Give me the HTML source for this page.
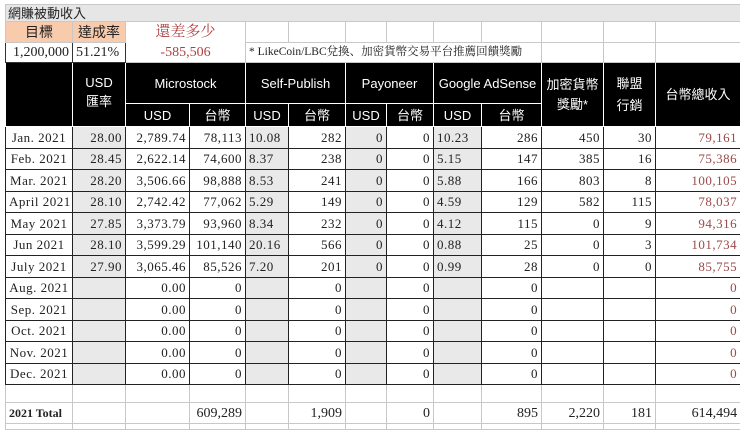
<!DOCTYPE html>
<html><head><meta charset="utf-8"><style>
body{margin:0;background:#fff;width:740px;height:427px;overflow:hidden;font-family:"Liberation Serif","Noto Serif CJK SC",serif;}
table{position:absolute;left:5px;top:4px;border-collapse:collapse;table-layout:fixed;width:735px}
td{border:1px solid #c8c8c8;padding:0 3px;font-size:13px;white-space:nowrap;overflow:hidden;text-align:right;color:#222;line-height:15px}
.t td{height:16px}
.h{background:#000;color:#fff;font-family:"Liberation Sans","Noto Sans CJK TC",sans-serif;font-size:13px;text-align:center;border-color:#fff}
.d td{height:20.5px;border-color:#222;letter-spacing:.5px}
.g{background:#e9e9e9}
.r{color:#9b4a4a}
.pk{background:#f8cbad;text-align:center;font-family:"Liberation Sans","Noto Sans CJK TC",sans-serif;font-size:14px}
.c{text-align:center}
.tot td{height:20px;font-size:14px}
</style></head><body>
<table>
<colgroup><col style="width:67px"><col style="width:53px"><col style="width:64px"><col style="width:56px"><col style="width:43px"><col style="width:57px"><col style="width:41px"><col style="width:47px"><col style="width:48px"><col style="width:60px"><col style="width:62px"><col style="width:52px"><col style="width:85px"></colgroup>
<tr class="t"><td colspan="13" style="background:#e6e6e6;text-align:left;font-family:'Liberation Sans','Noto Sans CJK TC',sans-serif;font-size:13px;padding-left:2px">網賺被動收入</td></tr>
<tr style="height:21px"><td class="pk">目標</td><td class="pk">達成率</td><td colspan="2" class="c" style="color:#b04040;font-size:15px;border-bottom:none">還差多少</td><td></td><td></td><td></td><td></td><td></td><td></td><td></td><td></td><td></td></tr>
<tr style="height:20px"><td style="font-size:14px;border-color:#333">1,200,000</td><td style="text-align:left;font-size:14px;border-color:#333">51.21%</td><td colspan="2" class="c" style="color:#b04040;font-size:14px;border-top:none">-585,506</td><td colspan="6" style="text-align:left;font-size:11.5px">* LikeCoin/LBC兌換、加密貨幣交易平台推薦回饋獎勵</td><td></td><td></td><td></td></tr>
<tr style="height:41px"><td class="h" rowspan="2"></td><td class="h" rowspan="2" style="vertical-align:top;padding-top:10px;line-height:19px">USD<br>匯率</td><td class="h" colspan="2">Microstock</td><td class="h" colspan="2">Self-Publish</td><td class="h" colspan="2">Payoneer</td><td class="h" colspan="2">Google AdSense</td><td class="h" rowspan="2" style="line-height:20px">加密貨幣<br>獎勵*</td><td class="h" rowspan="2" style="line-height:22px">聯盟<br>行銷</td><td class="h" rowspan="2">台幣總收入</td></tr>
<tr style="height:23px"><td class="h">USD</td><td class="h">台幣</td><td class="h">USD</td><td class="h">台幣</td><td class="h">USD</td><td class="h">台幣</td><td class="h">USD</td><td class="h">台幣</td></tr>
<tr class="d"><td class="c">Jan. 2021</td><td class="g">28.00</td><td>2,789.74</td><td>78,113</td><td class="g" style="text-align:left">10.08</td><td>282</td><td class="g">0</td><td>0</td><td class="g" style="text-align:left">10.23</td><td>286</td><td>450</td><td>30</td><td class="r">79,161</td></tr>
<tr class="d"><td class="c">Feb. 2021</td><td class="g">28.45</td><td>2,622.14</td><td>74,600</td><td class="g" style="text-align:left">8.37</td><td>238</td><td class="g">0</td><td>0</td><td class="g" style="text-align:left">5.15</td><td>147</td><td>385</td><td>16</td><td class="r">75,386</td></tr>
<tr class="d"><td class="c">Mar. 2021</td><td class="g">28.20</td><td>3,506.66</td><td>98,888</td><td class="g" style="text-align:left">8.53</td><td>241</td><td class="g">0</td><td>0</td><td class="g" style="text-align:left">5.88</td><td>166</td><td>803</td><td>8</td><td class="r">100,105</td></tr>
<tr class="d"><td class="c">April 2021</td><td class="g">28.10</td><td>2,742.42</td><td>77,062</td><td class="g" style="text-align:left">5.29</td><td>149</td><td class="g">0</td><td>0</td><td class="g" style="text-align:left">4.59</td><td>129</td><td>582</td><td>115</td><td class="r">78,037</td></tr>
<tr class="d"><td class="c">May 2021</td><td class="g">27.85</td><td>3,373.79</td><td>93,960</td><td class="g" style="text-align:left">8.34</td><td>232</td><td class="g">0</td><td>0</td><td class="g" style="text-align:left">4.12</td><td>115</td><td>0</td><td>9</td><td class="r">94,316</td></tr>
<tr class="d"><td class="c">Jun 2021</td><td class="g">28.10</td><td>3,599.29</td><td>101,140</td><td class="g" style="text-align:left">20.16</td><td>566</td><td class="g">0</td><td>0</td><td class="g" style="text-align:left">0.88</td><td>25</td><td>0</td><td>3</td><td class="r">101,734</td></tr>
<tr class="d"><td class="c">July 2021</td><td class="g">27.90</td><td>3,065.46</td><td>85,526</td><td class="g" style="text-align:left">7.20</td><td>201</td><td class="g">0</td><td>0</td><td class="g" style="text-align:left">0.99</td><td>28</td><td>0</td><td>0</td><td class="r">85,755</td></tr>
<tr class="d"><td class="c">Aug. 2021</td><td class="g"></td><td>0.00</td><td>0</td><td class="g"></td><td>0</td><td class="g"></td><td>0</td><td class="g"></td><td>0</td><td></td><td></td><td class="r">0</td></tr>
<tr class="d"><td class="c">Sep. 2021</td><td class="g"></td><td>0.00</td><td>0</td><td class="g"></td><td>0</td><td class="g"></td><td>0</td><td class="g"></td><td>0</td><td></td><td></td><td class="r">0</td></tr>
<tr class="d"><td class="c">Oct. 2021</td><td class="g"></td><td>0.00</td><td>0</td><td class="g"></td><td>0</td><td class="g"></td><td>0</td><td class="g"></td><td>0</td><td></td><td></td><td class="r">0</td></tr>
<tr class="d"><td class="c">Nov. 2021</td><td class="g"></td><td>0.00</td><td>0</td><td class="g"></td><td>0</td><td class="g"></td><td>0</td><td class="g"></td><td>0</td><td></td><td></td><td class="r">0</td></tr>
<tr class="d"><td class="c">Dec. 2021</td><td class="g"></td><td>0.00</td><td>0</td><td class="g"></td><td>0</td><td class="g"></td><td>0</td><td class="g"></td><td>0</td><td></td><td></td><td class="r">0</td></tr>
<tr style="height:18px"><td></td><td></td><td></td><td></td><td></td><td></td><td></td><td></td><td></td><td></td><td></td><td></td><td></td></tr>
<tr class="tot"><td style="text-align:left;font-weight:bold;font-size:12px">2021 Total</td><td></td><td></td><td>609,289</td><td></td><td>1,909</td><td></td><td>0</td><td></td><td>895</td><td>2,220</td><td>181</td><td>614,494</td></tr>
<tr style="height:6px"><td></td><td></td><td></td><td></td><td></td><td></td><td></td><td></td><td></td><td></td><td></td><td></td><td></td></tr>
</table>
</body></html>
